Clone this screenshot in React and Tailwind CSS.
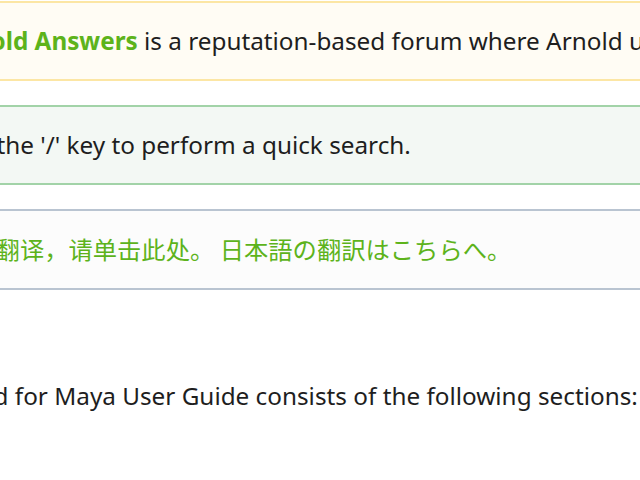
import React from 'react'

const notes = [
  {
    id: 'answers',
    box: 'border-[#fce6a4] bg-[#fffcf4]',
    body: (
      <>
        <a className="font-bold text-[#5db31b]">Arnold Answers</a> is a reputation-based forum where Arnold users can ask and answer questions.
      </>
    ),
  },
  {
    id: 'search',
    box: 'border-[#a2d3a8] bg-[#f3f8f4]',
    body: <>Use the '/' key to perform a quick search.</>,
  },
  {
    id: 'lang',
    box: 'border-[#b9c4d1] bg-[#fcfcfc]',
    body: (
      <span className="text-[#5db31b] [font-family:'Noto_Sans_CJK_SC','Noto_Sans',sans-serif]">
        中文翻译，请单击此处。 <span className="[font-family:'Noto_Sans_CJK_JP',sans-serif]">日本語の翻訳はこちらへ。</span>
      </span>
    ),
  },
]

const App = () => {
  return (
    <div className="w-[640px] h-[480px] overflow-hidden bg-white text-[#1e1e1e] [font-family:'Noto_Sans',sans-serif]">
      <div className="-ml-[68px] w-[800px] pt-px text-[24.3px] leading-[32px]">
        {notes.map(note => (
          <div
            key={note.id}
            className={`mb-6 border-2 px-[13px] py-[22px] whitespace-nowrap ${note.box}`}
          >
            {note.body}
          </div>
        ))}

        <p className="mt-[90px] whitespace-nowrap">
          Arnold for Maya User Guide consists of the following sections:
        </p>
      </div>
    </div>
  )
}

export default App
